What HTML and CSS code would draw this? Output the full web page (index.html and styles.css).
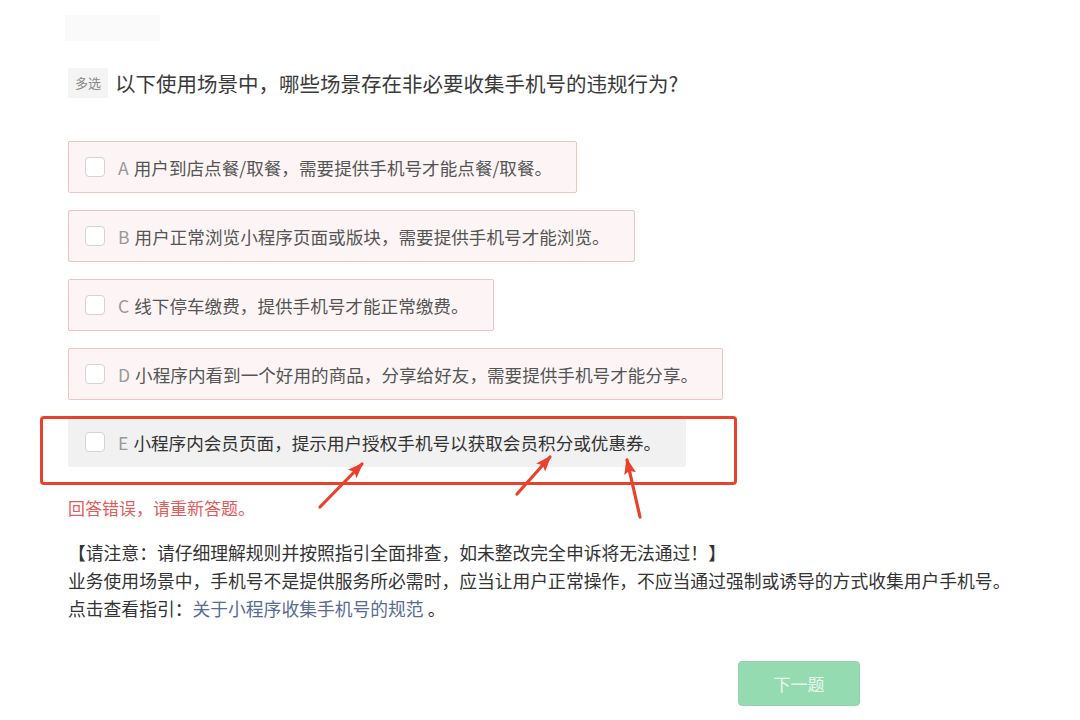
FILE: index.html
```html
<!DOCTYPE html>
<html>
	<head>
		<meta charset="utf-8">
		<title>多选题</title>
		<link rel="stylesheet" href="styles.css">
	</head>
	<body>
	  <div class="page">
	    <div class="crumb"></div>

	    <div class="question">
	      <span class="tag">多选</span>
	      <span class="title">以下使用场景中，哪些场景存在非必要收集手机号的违规行为?</span>
	    </div>

	    <div class="options">
	      <label class="opt wrong"><i class="box"></i><em>A</em>用户到店点餐/取餐，需要提供手机号才能点餐/取餐。</label>
	      <label class="opt wrong"><i class="box"></i><em>B</em>用户正常浏览小程序页面或版块，需要提供手机号才能浏览。</label>
	      <label class="opt wrong"><i class="box"></i><em>C</em>线下停车缴费，提供手机号才能正常缴费。</label>
	      <label class="opt wrong"><i class="box"></i><em>D</em>小程序内看到一个好用的商品，分享给好友，需要提供手机号才能分享。</label>
	      <div class="mark-wrap">
	        <label class="opt plain"><i class="box"></i><em>E</em>小程序内会员页面，提示用户授权手机号以获取会员积分或优惠券。</label>
	        <div class="mark"></div>
	        <svg class="arrows" width="340" height="75" viewBox="0 0 340 75">
	          <defs>
	            <marker id="head" viewBox="0 0 16 12" refX="14" refY="6" markerWidth="16" markerHeight="12" markerUnits="userSpaceOnUse" orient="auto">
	              <path d="M0,0 L16,6 L0,12 L3,6 z" fill="#e8412c"/>
	            </marker>
	          </defs>
	          <!-- 标注箭头 -->
	          <g stroke="#e8412c" stroke-width="3.2" stroke-linecap="round" fill="none">
	            <line x1="4" y1="58" x2="46" y2="15" marker-end="url(#head)"/>
	            <line x1="201" y1="45" x2="234" y2="8" marker-end="url(#head)"/>
	            <line x1="324" y1="68" x2="311" y2="11" marker-end="url(#head)"/>
	          </g>
	        </svg>
	      </div>
	    </div>

	    <p class="err">回答错误，请重新答题。</p>

	    <div class="notice">
	      <p>【请注意：请仔细理解规则并按照指引全面排查，如未整改完全申诉将无法通过！】</p>
	      <p>业务使用场景中，手机号不是提供服务所必需时，应当让用户正常操作，不应当通过强制或诱导的方式收集用户手机号。</p>
	      <p>点击查看指引：<a href="#">关于小程序收集手机号的规范</a> 。</p>
	    </div>

	    <div class="foot">
	      <button class="next" disabled>下一题</button>
	    </div>
	  </div>
	</body>
</html>
```

FILE: styles.css
```css
      * { box-sizing: border-box; }
      body {
        margin: 0;
        background: #fff;
        font-family: "Noto Sans CJK SC", "Liberation Sans", sans-serif;
        color: #333;
      }
      .page {
        width: 1080px; height: 720px;
        padding: 15px 0 0 68px;
      }
      .crumb {
        width: 95px; height: 26px;
        margin-left: -3px;
        background: #fafafa;
      }

      .question {
        display: flex;
        align-items: center;
        margin-top: 27px;
        height: 30px;
      }
      .tag {
        width: 40px; height: 30px;
        line-height: 30px;
        text-align: center;
        background: #f4f4f4;
        color: #888;
        font-size: 13px;
        border-radius: 2px;
      }
      .title {
        margin-left: 7px;
        font-size: 20.5px;
        color: #3a3a3a;
      }

      .options {
        display: flex;
        flex-direction: column;
        align-items: flex-start;
        gap: 17px;
        margin-top: 43px;
      }
      .opt {
        display: flex;
        align-items: center;
        height: 52px;
        padding: 0 24px 0 16px;
        font-size: 17.6px;
        color: #555;
        border-radius: 2px;
        white-space: nowrap;
      }
      .opt.wrong {
        background: #fdf5f5;
        border: 1px solid #f0c4c4;
      }
      .opt.plain {
        background: #f1f1f1;
        border: 1px solid #f1f1f1;
        color: #333;
        height: 50px;
      }
      .opt em {
        font-style: normal;
        color: #999;
        margin-right: 5px;
      }
      .box {
        width: 20px; height: 20px;
        margin-right: 13px;
        border: 1px solid #d4d4d4;
        border-radius: 4px;
        background: #fff;
        flex: none;
      }

      .mark-wrap { position: relative; }
      .mark {
        position: absolute;
        left: -28px; top: -1px;
        width: 697px; height: 69px;
        border: 3px solid #e8412c;
        border-radius: 4px;
      }
      .arrows {
        position: absolute;
        left: 248px; top: 32px;
      }

      .err {
        margin: 28px 0 0;
        font-size: 17px;
        color: #e25c5c;
      }

      .notice {
        margin-top: 18px;
        font-size: 17.8px;
        line-height: 28px;
        color: #333;
      }
      .notice p { margin: 0; }
      .notice a {
        color: #576b95;
        text-decoration: none;
      }

      .foot {
        display: flex;
        padding-left: 670px;
        margin-top: 39px;
      }
      .next {
        width: 122px; height: 45px;
        background: #95dbb1;
        border: 1px solid #8ed6aa;
        border-radius: 4px;
        color: #e8f7ee;
        font-family: inherit;
        font-size: 17px;
      }
```
